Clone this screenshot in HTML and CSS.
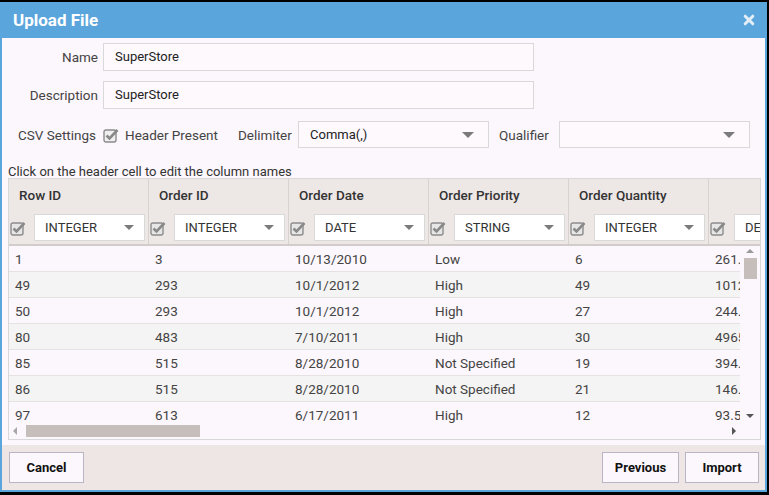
FILE: index.html
```html
<!DOCTYPE html>
<html>
<head>
<meta charset="utf-8">
<link rel="stylesheet" href="styles.css">
</head>
<body>
<div class="dialog">
  <div class="titlebar">
    <span class="title">Upload File</span>
    <svg class="close" width="12" height="12" viewBox="0 0 12 12"><path d="M2.2 2.2 L9.8 9.8 M9.8 2.2 L2.2 9.8" stroke="#e4eef7" stroke-width="3" stroke-linecap="round"/></svg>
  </div>
  <div class="content">
    <div class="frow">
      <span class="flabel">Name</span>
      <div class="finput">SuperStore</div>
    </div>
    <div class="frow">
      <span class="flabel">Description</span>
      <div class="finput">SuperStore</div>
    </div>
    <div class="csvrow">
      <span class="csvlabel">CSV Settings</span>
      <svg class="chk big" width="16" height="16" viewBox="0 0 16 16"><rect x="1" y="3" width="12" height="12" rx="2" fill="#efefef" stroke="#8c8c8c" stroke-width="1.4"/><path d="M3.5 8.5 L6.5 11.5 L14.5 3" fill="none" stroke="#888" stroke-width="2.6"/></svg>
      <span class="hp">Header Present</span>
      <span class="dl">Delimiter</span>
      <div class="sel w190"><span>Comma(,)</span><i class="caret"></i></div>
      <span class="ql">Qualifier</span>
      <div class="sel w190"><span></span><i class="caret"></i></div>
    </div>
    <div class="hint">Click on the header cell to edit the column names</div>
    <div class="grid">
      <div class="ghead">
        <div class="hrow names">
          <div class="hcell">Row ID</div>
          <div class="hcell">Order ID</div>
          <div class="hcell">Order Date</div>
          <div class="hcell">Order Priority</div>
          <div class="hcell">Order Quantity</div>
          <div class="hcell"></div>
        </div>
        <div class="hrow types">
          <div class="tcell"><svg class="chk" width="16" height="16" viewBox="0 0 16 16"><rect x="1" y="3" width="12" height="12" rx="2" fill="#e6e6e6" stroke="#8c8c8c" stroke-width="1.4"/><path d="M3.5 8.5 L6.5 11.5 L14.5 3" fill="none" stroke="#8a8a8a" stroke-width="2.6"/></svg><div class="tsel"><span>INTEGER</span><i class="caret"></i></div></div>
          <div class="tcell"><svg class="chk" width="16" height="16" viewBox="0 0 16 16"><rect x="1" y="3" width="12" height="12" rx="2" fill="#e6e6e6" stroke="#8c8c8c" stroke-width="1.4"/><path d="M3.5 8.5 L6.5 11.5 L14.5 3" fill="none" stroke="#8a8a8a" stroke-width="2.6"/></svg><div class="tsel"><span>INTEGER</span><i class="caret"></i></div></div>
          <div class="tcell"><svg class="chk" width="16" height="16" viewBox="0 0 16 16"><rect x="1" y="3" width="12" height="12" rx="2" fill="#e6e6e6" stroke="#8c8c8c" stroke-width="1.4"/><path d="M3.5 8.5 L6.5 11.5 L14.5 3" fill="none" stroke="#8a8a8a" stroke-width="2.6"/></svg><div class="tsel"><span>DATE</span><i class="caret"></i></div></div>
          <div class="tcell"><svg class="chk" width="16" height="16" viewBox="0 0 16 16"><rect x="1" y="3" width="12" height="12" rx="2" fill="#e6e6e6" stroke="#8c8c8c" stroke-width="1.4"/><path d="M3.5 8.5 L6.5 11.5 L14.5 3" fill="none" stroke="#8a8a8a" stroke-width="2.6"/></svg><div class="tsel"><span>STRING</span><i class="caret"></i></div></div>
          <div class="tcell"><svg class="chk" width="16" height="16" viewBox="0 0 16 16"><rect x="1" y="3" width="12" height="12" rx="2" fill="#e6e6e6" stroke="#8c8c8c" stroke-width="1.4"/><path d="M3.5 8.5 L6.5 11.5 L14.5 3" fill="none" stroke="#8a8a8a" stroke-width="2.6"/></svg><div class="tsel"><span>INTEGER</span><i class="caret"></i></div></div>
          <div class="tcell"><svg class="chk" width="16" height="16" viewBox="0 0 16 16"><rect x="1" y="3" width="12" height="12" rx="2" fill="#e6e6e6" stroke="#8c8c8c" stroke-width="1.4"/><path d="M3.5 8.5 L6.5 11.5 L14.5 3" fill="none" stroke="#8a8a8a" stroke-width="2.6"/></svg><div class="tsel"><span>DECIMAL</span><i class="caret"></i></div></div>
        </div>
      </div>
      <div class="gbody">
        <div class="rows">
          <div class="drow"><span>1</span><span>3</span><span>10/13/2010</span><span>Low</span><span>6</span><span>261.54</span></div>
          <div class="drow alt"><span>49</span><span>293</span><span>10/1/2012</span><span>High</span><span>49</span><span>10123.02</span></div>
          <div class="drow"><span>50</span><span>293</span><span>10/1/2012</span><span>High</span><span>27</span><span>244.57</span></div>
          <div class="drow alt"><span>80</span><span>483</span><span>7/10/2011</span><span>High</span><span>30</span><span>4965.7595</span></div>
          <div class="drow"><span>85</span><span>515</span><span>8/28/2010</span><span>Not Specified</span><span>19</span><span>394.27</span></div>
          <div class="drow alt"><span>86</span><span>515</span><span>8/28/2010</span><span>Not Specified</span><span>21</span><span>146.69</span></div>
          <div class="drow"><span>97</span><span>613</span><span>6/17/2011</span><span>High</span><span>12</span><span>93.54</span></div>
        </div>
        <div class="vscroll">
          <i class="arr up"></i>
          <div class="vthumb"></div>
          <div class="vspace"></div>
          <i class="arr down"></i>
        </div>
      </div>
      <div class="hbar">
        <div class="hscroll">
          <i class="arr left"></i>
          <div class="hthumb"></div>
          <div class="hspace"></div>
          <i class="arr right"></i>
        </div>
        <div class="corner"></div>
      </div>
    </div>
  </div>
  <div class="footer">
    <button class="btn cancel">Cancel</button>
    <div class="spacer"></div>
    <button class="btn prev">Previous</button>
    <button class="btn imp">Import</button>
  </div>
</div>
</body>
</html>
```

FILE: styles.css
```css
* { box-sizing: border-box; }
html, body { margin: 0; padding: 0; background: #000; }
body { padding-top: 2px; font-family: Roboto, "Liberation Sans", sans-serif; font-size: 13px; color: #333; }

.dialog {
  width: 767px;
  height: 490px;
  border: 2px solid #5aa5dc;
  background: #fcf7fc;
  display: flex;
  flex-direction: column;
  overflow: hidden;
}

.titlebar {
  height: 34px;
  flex: none;
  background: #5aa5dc;
  display: flex;
  align-items: center;
  padding: 0 10px 0 11px;
}
.title { color: #fff; font-weight: bold; font-size: 17px; flex: 1; padding-bottom: 3px; }
.close { margin-bottom: 3px; }

.content {
  height: 407px;
  flex: none;
  padding-top: 5px;
  display: flex;
  flex-direction: column;
}

.frow { display: flex; align-items: center; height: 28px; margin-bottom: 10px; }
.flabel { width: 96px; text-align: right; color: #444; font-size: 13.5px; }
.finput {
  margin-left: 5px;
  width: 431px;
  height: 28px;
  border: 1px solid #d9d9d9;
  background: #fdf9fd;
  padding-left: 11px;
  line-height: 25px;
  color: #222;
}

.csvrow { display: flex; align-items: center; height: 27px; margin-top: 2px; color: #444; font-size: 13.5px; }
.csvlabel { margin-left: 16px; width: 84px; }
.chk { flex: none; display: block; }
.chk.big { margin-left: 1px; }
.hp { margin-left: 6px; width: 113px; }
.dl { width: 60px; }
.ql { margin-left: 10px; width: 60px; }
.sel {
  height: 27px;
  border: 1px solid #d9d9d9;
  background: #fdf9fd;
  display: flex;
  align-items: center;
  padding: 0 14px 0 11px;
  color: #222;
  font-size: 13px;
}
.sel span { flex: 1; }
.w190 { width: 191px; }
.caret {
  display: block;
  width: 0; height: 0;
  border-left: 6px solid transparent;
  border-right: 6px solid transparent;
  border-top: 6px solid #7b7b7b;
}

.hint { margin: 17px 0 0 6px; height: 13px; line-height: 13px; color: #333; font-size: 13px; }

.grid {
  margin-left: 6px;
  width: 753px;
  height: 262px;
  border: 1px solid #d8d8d8;
  display: flex;
  flex-direction: column;
  overflow: hidden;
}

.ghead { flex: none; background: #ede7e6; border-bottom: 2px solid #d2cccb; overflow: hidden; }
.hrow { display: flex; width: 900px; }
.names { height: 32px; }
.types { height: 33px; }
.hcell {
  flex: none;
  width: 140px;
  border-right: 1px solid #d8d2d1;
  padding-left: 10px;
  line-height: 32px;
  font-weight: 500;
  font-size: 13.5px;
  color: #333;
}
.tcell {
  flex: none;
  width: 140px;
  border-right: 1px solid #d8d2d1;
  padding-left: 1px;
  display: flex;
  align-items: center;
}
.tsel {
  margin-left: 8px;
  width: 111px;
  height: 27px;
  background: #fff;
  border: 1px solid #d9d9d9;
  display: flex;
  align-items: center;
  padding: 0 10px 0 10px;
  font-size: 13px;
  color: #333;
}
.tsel span { flex: 1; }
.tsel .caret { border-left-width: 5px; border-right-width: 5px; border-top-width: 5px; }

.gbody { flex: none; height: 177px; display: flex; }
.rows { width: 731px; flex: none; overflow: hidden; }
.drow {
  display: flex;
  height: 26px;
  border-bottom: 1px solid #e6e2e2;
  background: #fcf7fc;
  align-items: center;
  white-space: nowrap;
}
.drow.alt { background: #f5f4f4; }
.drow span { flex: none; width: 140px; padding-left: 6px; color: #444; font-size: 13.5px; }

.vscroll {
  flex: none;
  width: 20px;
  display: flex;
  flex-direction: column;
  align-items: center;
  padding-top: 3px;
  background: #fcf7fc;
}
.vthumb { width: 13px; height: 21px; background: #c6bebb; margin-top: 5px; }
.vspace { flex: 1; }
.down { margin-bottom: 5px; }

.arr { display: block; width: 0; height: 0; }
.arr.up { border-left: 4px solid transparent; border-right: 4px solid transparent; border-bottom: 4px solid #9a9a9a; }
.arr.down { border-left: 4px solid transparent; border-right: 4px solid transparent; border-top: 4px solid #555; }
.arr.left { border-top: 4px solid transparent; border-bottom: 4px solid transparent; border-right: 4px solid #a8a8a8; }
.arr.right { border-top: 4px solid transparent; border-bottom: 4px solid transparent; border-left: 4px solid #555; }

.hbar { flex: none; height: 16px; display: flex; background: #fcf7fc; }
.hscroll { width: 733px; display: flex; align-items: center; padding: 0 6px 0 4px; }
.hthumb { width: 174px; height: 12px; background: #c6bebb; margin-left: 9px; }
.hspace { flex: 1; }
.corner { flex: 1; }

.footer {
  flex: 1;
  margin-top: 0;
  background: #eee6e5;
  display: flex;
  align-items: flex-start;
  padding: 7px 6px 0 7px;
}
.spacer { flex: 1; }
.btn {
  height: 31px;
  border: 1px solid #b9b5c4;
  background: #fcf7fc;
  font-family: Roboto, "Liberation Sans", sans-serif;
  font-weight: bold;
  font-size: 13px;
  color: #111;
  padding: 0;
}
.cancel { width: 75px; }
.prev { width: 77px; }
.imp { width: 74px; margin-left: 6px; }
```
